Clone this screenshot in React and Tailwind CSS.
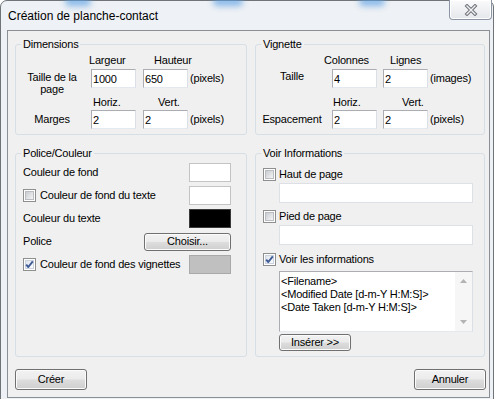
import React from 'react';

const font = "font-['Liberation_Sans',Arial,sans-serif]";

const Check = ({ checked }) => (
  <span className="relative flex h-[13px] w-[13px] shrink-0 items-center justify-center border border-[#8e8f8f] bg-white">
    <span
      className={`h-[9px] w-[9px] border ${
        checked
          ? 'border-[#c9d2de] bg-[linear-gradient(135deg,#dfe5ec,#fafbfc)]'
          : 'border-[#b9bdc1] bg-[linear-gradient(135deg,#c8ccd1,#f4f4f4)]'
      }`}
    />
    {checked && (
      <svg className="absolute left-0 top-0" width="11" height="11" viewBox="0 0 11 11">
        <path d="M2.2 5.6 L4.3 8 L8.8 2.4" fill="none" stroke="#3d5a96" strokeWidth="1.9" strokeLinejoin="round" />
      </svg>
    )}
  </span>
);

const Field = ({ value, w = 'w-[45px]' }) => (
  <input
    readOnly
    value={value}
    className={`${w} h-[19px] shrink-0 border border-[#abadb3] border-b-[#e3e9ef] border-r-[#dbdfe6] bg-white pl-[1px] text-[11px] text-black outline-none`}
  />
);

const Button = ({ children, className = '' }) => (
  <button
    className={`rounded-[3px] border border-[#707070] bg-[linear-gradient(to_bottom,#f2f2f2_0%,#ebebeb_48%,#dddddd_52%,#cfcfcf_100%)] text-[11px] leading-none text-black shadow-[inset_0_0_0_1px_#fbfbfb] ${className}`}
  >
    {children}
  </button>
);

const Group = ({ title, className = '', children }) => (
  <fieldset className={`rounded-[3px] border border-[#d5dfe5] ${className}`}>
    <legend className="ml-[5px] px-[2px] text-[11px] leading-[13px]">{title}</legend>
    {children}
  </fieldset>
);

const Swatch = ({ className }) => (
  <span className={`h-[19px] w-[42px] shrink-0 border ${className}`} />
);

const Row = ({ children }) => (
  <div className="flex h-[23px] items-center justify-between">{children}</div>
);

export default function App() {
  return (
    <div className={`relative h-[399px] w-[495px] overflow-hidden bg-white text-[11px] tracking-[-0.2px] text-black ${font}`}>
      <div className="relative h-[406px] w-[494px] rounded-t-[7px] border border-[#6f7479] bg-[#eef1f5]">
        {/* aero reflections */}
        <span className="absolute left-[64px] top-[-4px] h-[9px] w-[26px] rounded-full bg-[#5b9fe2] opacity-70 blur-[3px]" />
        <span className="absolute left-[212px] top-[-4px] h-[9px] w-[30px] rounded-full bg-[#5b9fe2] opacity-70 blur-[3px]" />
        <span className="absolute left-[358px] top-[-4px] h-[9px] w-[26px] rounded-full bg-[#5b9fe2] opacity-70 blur-[3px]" />

        {/* title bar */}
        <div className="flex h-[29px] items-center pl-[7px] text-[12px] tracking-normal">
          Création de planche-contact
        </div>
        <div className="absolute right-[1px] top-[-1px] flex h-[20px] w-[43px] items-center justify-center rounded-b-[4px] border border-t-0 border-[#8c96a2] bg-[linear-gradient(to_bottom,#fbfbfc,#e4e7eb)] shadow-[inset_0_0_0_1px_#ffffff]">
          <svg width="14" height="12" viewBox="0 0 14 12">
            <path d="M3 2 L11 10 M11 2 L3 10" stroke="#6d7178" strokeWidth="3.4" strokeLinecap="square" />
            <path d="M3 2 L11 10 M11 2 L3 10" stroke="#f2f3f5" strokeWidth="1.4" strokeLinecap="square" />
          </svg>
        </div>

        {/* client area */}
        <div className="ml-[6px] h-[368px] w-[483px] border border-[#8a8f96] bg-[#f0f0f0] pl-[7px] pt-[7px]">
          <div className="flex gap-[8px]">
            <Group title="Dimensions" className="h-[97px] w-[232px]">
              <div className="mt-[3px] flex h-[13px] items-center">
                <span className="ml-[73px] w-[65px]">Largeur</span>
                <span>Hauteur</span>
              </div>
              <div className="mt-[2px] flex h-[19px] items-center">
                <span className="w-[72px] self-start pt-[2px] text-center leading-[12px]">
                  Taille de la<br />page
                </span>
                <span className="ml-[3px] flex items-center">
                  <Field value="1000" />
                  <span className="ml-[7px]"><Field value="650" /></span>
                  <span className="ml-[2px]">(pixels)</span>
                </span>
              </div>
              <div className="mt-[8px] flex h-[13px] items-center">
                <span className="ml-[77px] w-[65px]">Horiz.</span>
                <span>Vert.</span>
              </div>
              <div className="mt-[1px] flex h-[19px] items-center">
                <span className="w-[72px] text-center">Marges</span>
                <span className="ml-[3px] flex items-center">
                  <Field value="2" />
                  <span className="ml-[7px]"><Field value="2" /></span>
                  <span className="ml-[2px]">(pixels)</span>
                </span>
              </div>
            </Group>

            <Group title="Vignette" className="h-[97px] w-[230px]">
              <div className="mt-[3px] flex h-[13px] items-center">
                <span className="ml-[68px] w-[66px]">Colonnes</span>
                <span>Lignes</span>
              </div>
              <div className="mt-[2px] flex h-[19px] items-center">
                <span className="w-[72px] self-start pt-[1px] text-center leading-[13px]">Taille</span>
                <span className="ml-[4px] flex items-center">
                  <Field value="4" />
                  <span className="ml-[6px]"><Field value="2" /></span>
                  <span className="ml-[2px]">(images)</span>
                </span>
              </div>
              <div className="mt-[8px] flex h-[13px] items-center">
                <span className="ml-[77px] w-[69px]">Horiz.</span>
                <span>Vert.</span>
              </div>
              <div className="mt-[1px] flex h-[19px] items-center">
                <span className="w-[72px] text-center">Espacement</span>
                <span className="ml-[4px] flex items-center">
                  <Field value="2" />
                  <span className="ml-[6px]"><Field value="2" /></span>
                  <span className="ml-[2px]">(pixels)</span>
                </span>
              </div>
            </Group>
          </div>

          <div className="mt-[12px] flex gap-[8px]">
            <Group title="Police/Couleur" className="h-[210px] w-[232px]">
              <div className="mt-[1px] pl-[7px] pr-[15px]">
                <Row>
                  <span>Couleur de fond</span>
                  <Swatch className="border-[#c4c4c4] bg-white" />
                </Row>
                <Row>
                  <span className="flex items-center gap-[4px]">
                    <Check />
                    Couleur de fond du texte
                  </span>
                  <Swatch className="border-[#c4c4c4] bg-white" />
                </Row>
                <Row>
                  <span>Couleur du texte</span>
                  <Swatch className="border-[#3a3a3a] bg-black" />
                </Row>
                <Row>
                  <span>Police</span>
                  <Button className="h-[18px] w-[87px]">Choisir...</Button>
                </Row>
                <Row>
                  <span className="flex items-center gap-[4px]">
                    <Check checked />
                    Couleur de fond des vignettes
                  </span>
                  <Swatch className="border-[#a9a9a9] bg-[#c0c0c0]" />
                </Row>
              </div>
            </Group>

            <Group title="Voir Informations" className="h-[210px] w-[230px]">
              <div className="pl-[7px]">
                <div className="mt-[7px] flex h-[15px] items-center gap-[3px]">
                  <Check />
                  Haut de page
                </div>
                <div className="ml-[16px] mt-[1px] h-[20px] w-[194px] border border-[#dde1e6] bg-white" />
                <div className="mt-[6px] flex h-[15px] items-center gap-[3px]">
                  <Check />
                  Pied de page
                </div>
                <div className="ml-[16px] mt-[1px] h-[20px] w-[194px] border border-[#dde1e6] bg-white" />
                <div className="mt-[7px] flex h-[15px] items-center gap-[3px]">
                  <Check checked />
                  Voir les informations
                </div>
                <div className="ml-[16px] mt-[4px] flex h-[61px] w-[194px] border border-[#abadb3] border-b-[#e3e9ef] border-r-[#dbdfe6] bg-white">
                  <div className="flex-1 pl-[1px] pt-[3px] leading-[13px]">
                    <div>&lt;Filename&gt;</div>
                    <div>&lt;Modified Date [d-m-Y H:M:S]&gt;</div>
                    <div>&lt;Date Taken [d-m-Y H:M:S]&gt;</div>
                  </div>
                  <div className="flex w-[17px] flex-col items-center justify-between bg-[#f6f6f6] py-[7px]">
                    <svg width="7" height="4" viewBox="0 0 7 4"><path d="M0 4 L3.5 0 L7 4 Z" fill="#b3b3b3" /></svg>
                    <svg width="7" height="4" viewBox="0 0 7 4"><path d="M0 0 L3.5 4 L7 0 Z" fill="#b3b3b3" /></svg>
                  </div>
                </div>
                <Button className="ml-[16px] mt-[2px] h-[17px] w-[72px]">Insérer &gt;&gt;</Button>
              </div>
            </Group>
          </div>

          <div className="mt-[12px] flex w-[471px] justify-between">
            <Button className="h-[21px] w-[72px]">Créer</Button>
            <Button className="h-[21px] w-[72px]">Annuler</Button>
          </div>
        </div>
      </div>
    </div>
  );
}
